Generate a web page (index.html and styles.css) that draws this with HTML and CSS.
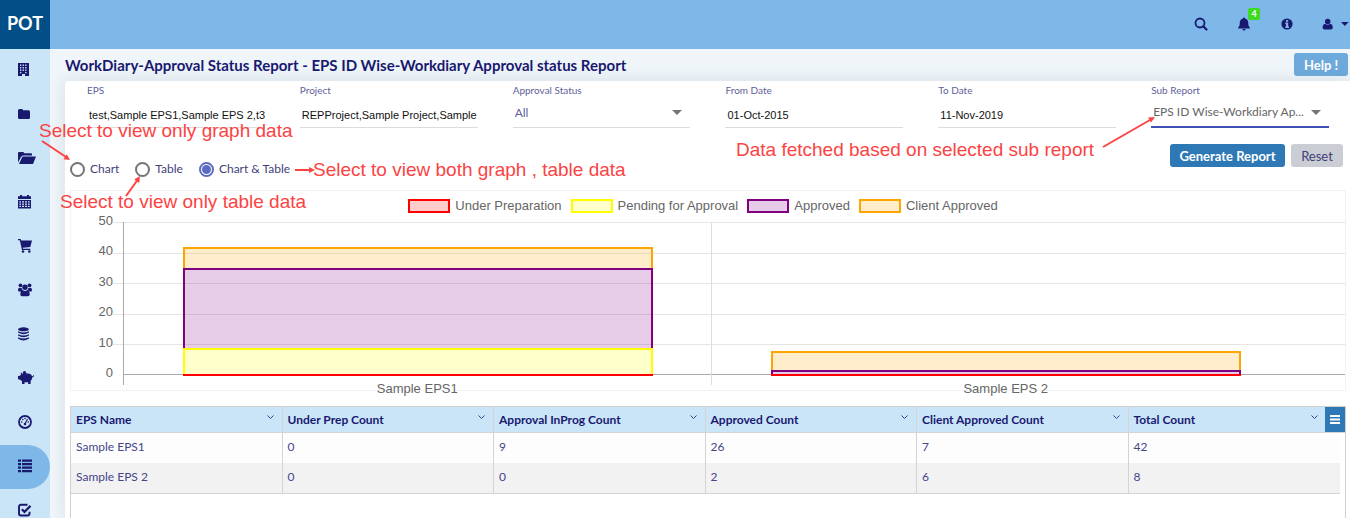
FILE: index.html
```html
<!DOCTYPE html>
<html lang="en">
<head>
<meta charset="utf-8">
<meta name="viewport" content="width=device-width, initial-scale=1">
<title>WorkDiary-Approval Status Report</title>
<link rel="stylesheet" href="styles.css">
</head>
<body>
<div class="app">
  <header class="topbar">
    <a class="brand" href="#">POT</a>
    <div class="actions">
      <button class="action" type="button" aria-label="Search"><svg width="14" height="14" viewBox="0 0 14 14"><circle cx="6" cy="6" r="4.500" fill="none" stroke="currentColor" stroke-width="1.800"/><path d="M9.200 9.200l3.300 3.300" stroke="currentColor" stroke-width="2.200" stroke-linecap="round"/></svg></button>
      <button class="action" type="button" aria-label="Notifications"><svg width="14" height="14" viewBox="0 0 14 14"><path d="M7 .5c.6 0 1 .4 1 .9C10 1.900 11.200 3.500 11.200 5.500c0 3 .8 4.300 1.800 5.200v.8H1v-.8c1-.9 1.800-2.200 1.800-5.200C2.800 3.500 4 1.900 6 1.400c0-.5.4-.9 1-.9zM5.500 12h3a1.500 1.500 0 0 1-3 0z" fill="currentColor"/></svg><span class="badge">4</span></button>
      <button class="action" type="button" aria-label="Information"><svg width="12" height="12" viewBox="0 0 12 12"><circle cx="6" cy="6" r="5.600" fill="currentColor"/><path d="M5 2h2.200v1.700H5zM4.300 4.600h2.900v3.900h.8V10H4.300V8.500H5V6h-.7z" fill="#7db8e8"/></svg></button>
      <button class="action user" type="button" aria-label="Account"><svg width="12" height="12" viewBox="0 0 12 12"><circle cx="6" cy="3.400" r="2.900" fill="currentColor"/><path d="M3.300 5.800c1.600 1.300 3.800 1.300 5.400 0 1.900.3 2.600 2 2.600 4 0 1.200-.7 1.900-1.700 1.900H2.400C1.400 11.700.7 11 .7 9.800c0-2 .7-3.700 2.600-4z" fill="currentColor"/></svg><svg width="8" height="4" viewBox="0 0 8 4"><path d="M0 0h8L4 4z" fill="currentColor"/></svg></button>
    </div>
  </header>
  <div class="body">
    <nav class="sidebar" aria-label="Main menu">
      <a href="#" aria-label="Company"><svg viewBox="0 0 16 14"><path fill-rule="evenodd" d="M0 0h11v13H7v-2H4v2H0zM2 1.500V3h1.300V1.500zm2.600 0V3h1.300V1.500zm2.600 0V3h1.300V1.500zM2 4v1.500h1.300V4zm2.600 0v1.500h1.300V4zm2.600 0v1.500h1.300V4zM2 6.500V8h1.300V6.500zm2.600 0V8h1.300V6.500zm2.600 0V8h1.300V6.500zM2 9v1.300h1.300V9zm5.200 0v1.300h1.300V9z"/></svg></a>
      <a href="#" aria-label="Files"><svg viewBox="0 0 16 14"><path d="M0 3.500Q0 2 1.500 2h2.300Q5 2 5 3.300h5.500q1.500 0 1.500 1.500v5.700q0 1.500-1.500 1.500h-9Q0 12 0 10.500z"/></svg></a>
      <a href="#" aria-label="Projects"><svg class="wide" viewBox="0 0 18 14"><path d="M0 2Q0 1 1 1h4q1 0 1 1.300h7q1 0 1 1v1.200H5Q3.800 4.500 3 6L0 11.500zM5 5.500h13l-3 7.500H1l3-6.500q.4-1 1-1z"/></svg></a>
      <a href="#" aria-label="Calendar"><svg viewBox="0 0 16 14"><path fill-rule="evenodd" d="M0 1.300h2V0h2v1.300h5V0h2v1.300h2V4H0zM0 5h13v8.500H0zm1.300 1.200v1.300H3V6.200zm2.700 0v1.300h2V6.200zm3 0v1.300h2V6.200zm3 0v1.300h1.700V6.200zM1.300 8.500v1.300H3V8.500zm2.700 0v1.300h2V8.500zm3 0v1.300h2V8.500zm3 0v1.300h1.700V8.500zM1.300 10.800V12H3v-1.200zm2.700 0V12h2v-1.200zm3 0V12h2v-1.200zm3 0V12h1.700v-1.200z"/></svg></a>
      <a href="#" aria-label="Procurement"><svg viewBox="0 0 16 14"><path d="M0 0h2.600l.5 1.500H14L12.300 8l-7.500.8.3 1h7.200V11H4L1.800 1.200H0z"/><circle cx="5" cy="12.500" r="1.300"/><circle cx="11.300" cy="12.500" r="1.300"/></svg></a>
      <a href="#" aria-label="Employees"><svg viewBox="0 0 16 14"><circle cx="2.500" cy="2.300" r="1.900"/><circle cx="11.500" cy="2.300" r="1.900"/><circle cx="7" cy="4.200" r="2.700"/><path d="M0 7.800Q0 4.800 1.500 4.800l2.300.5q.2 1.500 1 2.200-1.300.2-2 .9H1Q0 8.400 0 7.800zM14 7.800q0-3-1.500-3l-2.300.5q-.2 1.500-1 2.200 1.300.2 2 .9H13q1 0 1-.6zM2.300 11.500q0-4.300 2.500-4.300 2.200 1.500 4.400 0 2.500 0 2.500 4.300 0 1.700-1.700 1.700H4q-1.700 0-1.700-1.700z"/></svg></a>
      <a href="#" aria-label="Materials"><svg viewBox="0 0 16 14"><ellipse cx="5.500" cy="2.300" rx="5.500" ry="2"/><path d="M0 4.200q5.500 2.600 11 0v1.300q-5.500 3.600-11 0zM0 7.200q5.500 2.600 11 0v1.300q-5.500 3.600-11 0zM0 10.200q5.500 2.600 11 0v1.300q-5.500 3.800-11 0z"/></svg></a>
      <a href="#" aria-label="Finance"><svg class="wide" viewBox="0 0 18 14"><circle cx="6.500" cy="1.800" r="1.700"/><path d="M0 5l2-.3Q2.500 3.700 3 3.400L2.600 1.500q1.200.2 2 1.200 3.500-.8 7 0 2 .7 2.500 2.500 1.200.3 1.300-1.300h.7q0 2.200-1.800 2.500-.2 2-1.700 3.500V13h-2.500v-1.700H6.500V13H4v-2.700L2.200 8.700 0 8.200z"/></svg></a>
      <a href="#" aria-label="Dashboard"><svg viewBox="0 0 16 14"><circle cx="7" cy="7" r="6" fill="none" stroke="currentColor" stroke-width="1.800"/><circle cx="3.700" cy="7" r=".8"/><circle cx="4.800" cy="4.500" r=".8"/><circle cx="7" cy="3.500" r=".8"/><circle cx="10.300" cy="7" r=".8"/><circle cx="7" cy="9" r="1.300"/><path d="M9 3.700l1 .5L7.600 9l-1-.4z"/></svg></a>
      <a href="#" class="active" aria-label="Reports" aria-current="page"><svg viewBox="0 0 16 14"><path d="M0 .5h3v2.300H0zM4 .5h10v2.300H4zM0 4h3v2.300H0zM4 4h10v2.300H4zM0 7.500h3v2.300H0zM4 7.500h10v2.300H4zM0 11h3v2.300H0zM4 11h10v2.300H4z"/></svg></a>
      <a href="#" aria-label="Approvals"><svg viewBox="0 0 16 14"><path d="M9.500 1.800H3Q1 1.800 1 3.800v6.700q0 2 2 2h6.500q2 0 2-2V8.800" fill="none" stroke="currentColor" stroke-width="1.900"/><path d="M3.800 6.200l2.700 2.700 6-6" fill="none" stroke="currentColor" stroke-width="2.200"/></svg></a>
    </nav>
    <main class="content">
      <div class="titlebar">
        <h1>WorkDiary-Approval Status Report - EPS ID Wise-Workdiary Approval status Report</h1>
        <button class="btn help" type="button">Help !</button>
      </div>
      <section class="card">
        <form class="filters">
          <div class="field"><label for="eps">EPS</label><input id="eps" type="text" value="test,Sample EPS1,Sample EPS 2,t3"></div>
          <div class="field"><label for="project">Project</label><input id="project" type="text" value="REPProject,Sample Project,Sample"></div>
          <div class="field"><label for="status">Approval Status</label><div class="pick"><select id="status"><option>All</option></select><svg width="10" height="5" viewBox="0 0 10 5"><path d="M0 0h10L5 5z"/></svg></div></div>
          <div class="field"><label for="from">From Date</label><input id="from" type="text" value="01-Oct-2015"></div>
          <div class="field"><label for="to">To Date</label><input id="to" type="text" value="11-Nov-2019"></div>
          <div class="field focus"><label for="sub">Sub Report</label><div class="pick"><select id="sub"><option>EPS ID Wise-Workdiary Ap...</option></select><svg width="10" height="5" viewBox="0 0 10 5"><path d="M0 0h10L5 5z"/></svg></div></div>
        </form>
        <div class="controls">
          <div class="views">
            <label><input type="radio" name="view">Chart</label>
            <label><input type="radio" name="view">Table</label>
            <label><input type="radio" name="view" checked>Chart &amp; Table</label>
          </div>
          <div class="buttons">
            <button class="btn primary" type="button">Generate Report</button>
            <button class="btn reset" type="button">Reset</button>
          </div>
        </div>
        <section class="chart" aria-label="Approval status by EPS">
          <ul class="legend">
            <li><i class="prep"></i>Under Preparation</li>
            <li><i class="pending"></i>Pending for Approval</li>
            <li><i class="approved"></i>Approved</li>
            <li><i class="client"></i>Client Approved</li>
          </ul>
          <div class="graph">
            <div class="scale"><span>50</span><span>40</span><span>30</span><span>20</span><span>10</span><span>0</span></div>
            <div class="plot">
              <div class="lines"><i></i><i></i><i></i><i></i><i></i></div>
              <div class="slot"><div class="bar"><i class="client" style="height:14%"></i><i class="approved" style="height:52%"></i><i class="pending" style="height:18%"></i><i class="prep" style="height:0"></i></div></div>
              <div class="slot"><div class="bar"><i class="client" style="height:12%"></i><i class="approved" style="height:4%"></i><i class="prep" style="height:0"></i></div></div>
            </div>
            <div class="names"><span>Sample EPS1</span><span>Sample EPS 2</span></div>
          </div>
        </section>
        <div class="grid">
          <table>
            <thead><tr>
              <th><div>EPS Name<svg width="7" height="5" viewBox="0 0 7 5"><path d="M.5.5l3 3 3-3"/></svg></div></th>
              <th><div>Under Prep Count<svg width="7" height="5" viewBox="0 0 7 5"><path d="M.5.5l3 3 3-3"/></svg></div></th>
              <th><div>Approval InProg Count<svg width="7" height="5" viewBox="0 0 7 5"><path d="M.5.5l3 3 3-3"/></svg></div></th>
              <th><div>Approved Count<svg width="7" height="5" viewBox="0 0 7 5"><path d="M.5.5l3 3 3-3"/></svg></div></th>
              <th><div>Client Approved Count<svg width="7" height="5" viewBox="0 0 7 5"><path d="M.5.5l3 3 3-3"/></svg></div></th>
              <th><div>Total Count<svg width="7" height="5" viewBox="0 0 7 5"><path d="M.5.5l3 3 3-3"/></svg></div></th>
              <th class="gutter"></th>
            </tr></thead>
            <tbody>
              <tr><td>Sample EPS1</td><td>0</td><td>9</td><td>26</td><td>7</td><td>42</td><td class="gutter"></td></tr>
              <tr><td>Sample EPS 2</td><td>0</td><td>0</td><td>2</td><td>6</td><td>8</td><td class="gutter"></td></tr>
            </tbody>
          </table>
          <button class="gridmenu" type="button" aria-label="Grid menu"><svg width="10" height="9" viewBox="0 0 10 9"><path d="M0 0h10v2H0zM0 3.500h10v2H0zM0 7h10v2H0z" fill="#fff"/></svg></button>
        </div>
      </section>
    </main>
  </div>
  <div class="notes">
    <p class="note n-chart">Select to view only graph data</p>
    <p class="note n-table">Select to view only table data</p>
    <p class="note n-both">Select to view both graph , table data</p>
    <p class="note n-sub">Data fetched based on selected sub report</p>
    <svg class="arrow a-chart" width="30" height="21" viewBox="0 0 30 21"><path d="M1 1l24 16" /><path class="head" d="M29 20l-6.500-.8 3.300-5z"/></svg>
    <svg class="arrow a-table" width="16" height="22" viewBox="0 0 16 22"><path d="M1 21L12.500 5"/><path class="head" d="M15 1l-.8 7-5-3.600z"/></svg>
    <svg class="arrow a-both" width="20" height="8" viewBox="0 0 20 8"><path d="M0 4h15"/><path class="head" d="M20 4l-6 3V1z"/></svg>
    <svg class="arrow a-sub" width="54" height="32" viewBox="0 0 54 32"><path d="M1 31L48 4"/><path class="head" d="M53 1l-4 5.600-3-5z"/></svg>
  </div>
</div>
</body>
</html>
```
FILE: styles.css
```css
* { box-sizing: border-box; }
body { margin: 0; font: 12px/16px Lato, "Liberation Sans", sans-serif; color: #191970; }
button, input, select { font: inherit; color: inherit; margin: 0; }
button { cursor: pointer; }
.app { position: relative; display: flex; flex-direction: column; height: 100vh; overflow: hidden; }

.topbar { display: flex; flex: none; justify-content: space-between; height: 49px; background: #7db8e8; }
.brand { width: 50px; padding-top: 12px; background: #024f87; color: #fff; font-size: 18px; line-height: 22px; font-weight: 700; text-align: center; text-decoration: none; }
.actions { display: flex; }
.action { position: relative; display: flex; align-items: center; justify-content: center; width: 43px; padding: 0 1px 2px 0; border: 0; background: none; }
.action.user { justify-content: flex-start; gap: 8px; width: 41px; padding-left: 13px; }
.badge { position: absolute; top: 8px; left: 25px; width: 12px; height: 12px; border-radius: 2px; background: #3bdb20; color: #fff; font-size: 9px; line-height: 11px; font-weight: 700; }

.body { display: flex; flex: 1; min-height: 0; }
.sidebar { flex: none; width: 50px; overflow: hidden; background: #cbe5f8; }
.sidebar a { display: flex; align-items: center; height: 44px; padding: 0 0 2px 18px; color: #191970; }
.sidebar a.active { background: #7db8e8; border-radius: 0 22px 22px 0; }
.sidebar svg { width: 16px; height: 14px; fill: currentColor; }
.sidebar svg.wide { width: 18px; }

.content { display: flex; flex: 1; flex-direction: column; min-width: 0; padding-left: 15px; background: #eff5f9; }
.titlebar { display: flex; flex: none; align-items: center; justify-content: space-between; height: 32px; padding: 0 2px 1px 0; }
h1 { margin: 0; font-size: 15px; line-height: 20px; font-weight: 700; }
.btn { height: 23px; padding: 0 9px; border: 0; border-radius: 3px; font-size: 13px; line-height: 20px; font-weight: 700; white-space: nowrap; }
.help { width: 54px; background: #6daadb; color: #fff; }
.primary { width: 115px; background: #2e79b5; color: #fff; }
.reset { width: 52px; background: #cacdd3; color: #3f3f7a; font-weight: 400; }

.card { flex: 1; display: flex; flex-direction: column; min-height: 0; padding: 3px 4px 0 5px; border-radius: 4px 0 0 0; background: #fff; box-shadow: 0 0 16px rgba(40, 70, 90, .12); }
.filters { display: grid; grid-template-columns: repeat(6, minmax(0, 1fr)); gap: 35px; padding: 0 17px; }
.field { display: flex; flex-direction: column; }
.field label { font-size: 10px; line-height: 13px; color: #5f5f9c; }
.field input { width: 100%; height: 31px; padding: 6px 0 0 2px; border: 0; border-bottom: 1px solid #dcdcdc; background: none; color: #111; font: 11px "Liberation Sans", Arial, sans-serif; outline: 0; }
.pick { display: flex; align-items: center; height: 31px; padding: 1px 8px 0 2px; border-bottom: 1px solid #dcdcdc; }
.pick select { flex: 1; min-width: 0; padding: 0; border: 0; background: none; appearance: none; color: #5f5f9c; font-size: 12px; }
.pick svg { fill: #757575; }
.focus .pick { border-bottom: 2px solid #3f51b5; }
.focus select { color: #666; }

.controls { display: flex; justify-content: space-between; height: 62px; padding-top: 16px; }
.views { display: flex; align-items: center; gap: 16px; height: 50px; }
.views label { display: flex; align-items: center; gap: 5px; color: #3f3f7a; }
.views input { display: grid; place-items: center; width: 15px; height: 15px; border: 2px solid #757575; border-radius: 50%; appearance: none; }
.views input:checked { border-color: #5c6bc0; }
.views input:checked::after { content: ""; width: 9px; height: 9px; border-radius: 50%; background: #5c6bc0; }
.buttons { display: flex; gap: 6px; padding-right: 3px; }

.chart { height: 201px; border: 1px solid #f2f2f2; color: #666; font-family: "Liberation Sans", Arial, sans-serif; font-size: 13px; }
.legend { display: flex; justify-content: center; gap: 9px; height: 31px; margin: 0; padding: 7px 10px 0 0; list-style: none; }
.legend li { display: flex; align-items: center; gap: 5px; height: 16px; white-space: nowrap; }
.legend i { width: 42px; height: 14px; border: 2px solid; }
.graph { display: grid; grid-template-columns: 52px 1fr; }
.scale { display: flex; flex-direction: column; justify-content: space-between; height: 168px; margin-top: -9px; padding-right: 10px; text-align: right; }
.plot { position: relative; display: grid; grid-template-columns: 588fr 588fr 45fr; height: 153px; border-bottom: 1px solid #aaa; }
.lines { position: absolute; inset: 0 0 -1px -10px; display: flex; flex-direction: column; }
.lines i { flex: 1; border-top: 1px solid #e5e5e5; }
.slot { position: relative; display: flex; height: 163px; padding: 0 10% 9px; border-left: 1px solid #dedede; }
.slot:nth-child(2) { border-color: #aaa; }
.bar { display: flex; flex: 1; flex-direction: column; justify-content: flex-end; }
.bar i { flex: none; border: 2px solid; border-bottom: 0; }
.bar .prep { margin-top: -2px; }
.prep { border-color: #f00 !important; background: rgba(255, 0, 0, .2); }
.pending { border-color: #ff0 !important; background: rgba(255, 255, 0, .2); }
.approved { border-color: #800080 !important; background: rgba(128, 0, 128, .2); }
.client { border-color: #ffa500 !important; background: rgba(255, 165, 0, .2); }
.names { grid-column: 2; display: grid; grid-template-columns: 588fr 588fr 45fr; text-align: center; }

.grid { position: relative; flex: 1; margin-top: 15px; border: 1px solid #d0d0d0; border-bottom: 0; }
table { width: 100%; table-layout: fixed; border-collapse: separate; border-spacing: 0; }
th, td { padding: 0 5px; border-right: 1px solid #d4d4d4; border-bottom: 1px solid #d4d4d4; text-align: left; }
th { height: 26px; padding-right: 8px; background: #cbe5f8; font-weight: 700; white-space: nowrap; }
th div { display: flex; align-items: center; justify-content: space-between; }
th:nth-child(6) div { padding-right: 14px; }
th svg { margin-bottom: 4px; fill: none; stroke: #3f3f8a; }
td { height: 30px; padding-bottom: 3px; background: #fdfdfd; color: #45458a; }
tbody tr:first-child td { border-bottom: 0; }
tbody tr:last-child td { height: 31px; background: #f2f2f2; }
th:nth-child(6), td:nth-child(6) { border-right: 0; }
th.gutter { width: 5px; padding: 0; border-right: 0; }
tbody tr td.gutter { padding: 0; border: 0; background: #fff; }
.gridmenu { position: absolute; top: 0; right: 0; display: flex; align-items: center; justify-content: center; width: 20px; height: 25px; padding: 0; border: 0; background: #2e79b5; }

.notes { position: absolute; inset: 0; pointer-events: none; color: #fc4343; font: 19px/20px "Liberation Sans", Arial, sans-serif; }
.note { position: absolute; margin: 0; white-space: nowrap; }
.n-chart { left: 39px; top: 121px; }
.n-table { left: 60px; top: 192px; }
.n-both { left: 313px; top: 160px; }
.n-sub { left: 736px; top: 140px; }
.arrow { position: absolute; fill: none; stroke: #fc4343; stroke-width: 2; }
.arrow .head { fill: #fc4343; stroke: none; }
.a-chart { left: 41px; top: 140px; }
.a-table { left: 125px; top: 175px; }
.a-both { left: 295px; top: 166px; }
.a-sub { left: 1102px; top: 116px; }
```
